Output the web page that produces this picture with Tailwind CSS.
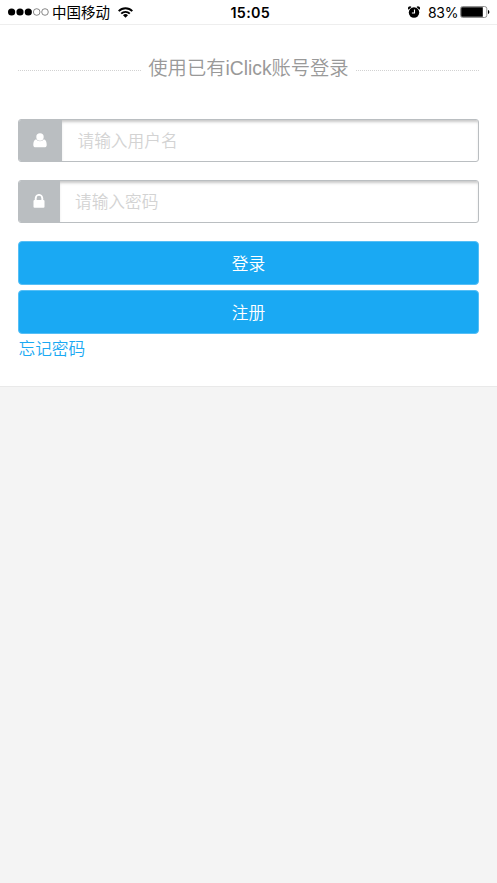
<!DOCTYPE html>
<html lang="zh-CN">
<head>
<meta charset="utf-8">
<meta name="viewport" content="width=device-width, initial-scale=1">
<title>iClick 登录</title>
<script src="https://cdn.jsdelivr.net/npm/@tailwindcss/browser@4"></script>
</head>
<body class="min-h-screen overflow-hidden bg-[#f4f4f4] font-['Inter','Noto_Sans_CJK_SC',sans-serif] font-[350]">
<header class="relative flex h-[25px] items-center justify-between border-b border-[#eeeeee] bg-white pl-2 pr-[7px] text-black">
  <div class="flex items-center">
    <svg class="h-[8px] w-[41px]" viewBox="0 0 41 8"><g fill="#000"><circle cx="3.6" cy="4" r="3.6"/><circle cx="12" cy="4" r="3.6"/><circle cx="20.3" cy="4" r="3.6"/></g><g fill="none" stroke="#555" stroke-width=".7"><circle cx="28.7" cy="4" r="3.3"/><circle cx="37" cy="4" r="3.3"/></g></svg>
    <span class="ml-[3px] pt-[2px] text-[14.5px] leading-[22px] font-normal">中国移动</span>
    <svg class="ml-[8px] h-[11px] w-[15px]" viewBox="0 0 15 11"><g fill="none" stroke="#000" stroke-width="1.9"><path d="M.7 4.1a9.6 9.6 0 0 1 13.6 0"/><path d="M3.2 6.6a6.1 6.1 0 0 1 8.6 0"/></g><path d="M5 8.3a3.6 3.6 0 0 1 5 0L7.5 10.8z"/></svg>
  </div>
  <time class="absolute left-[230.5px] top-0 text-[14.3px] leading-[26px] font-semibold tracking-[0.3px]">15:05</time>
  <div class="flex items-center">
    <svg class="h-[12px] w-[12px]" viewBox="0 0 12 12"><circle cx="6" cy="6.5" r="5.2"/><path d="M.6 3.7A2 2 0 0 1 3.5.9zM8.5.9a2 2 0 0 1 2.9 2.8z"/><path d="M6.5 3.5v3.5H3.9" fill="none" stroke="#fff" stroke-width="1.1"/></svg>
    <span class="ml-[8px] w-[32px] whitespace-nowrap pt-[2px] text-[14px] leading-[22px] font-normal tracking-[-0.3px]">83%</span>
    <svg class="h-[12px] w-[30px]" viewBox="0 0 30 12"><rect x=".5" y=".5" width="26.3" height="11" rx="2.2" fill="#fff" stroke="#777" stroke-width=".8"/><path d="M2.2 1.3H22.8V10.7H2.2a1 1 0 0 1-1-1V2.3a1 1 0 0 1 1-1z"/><path d="M28 4c1.8.3 1.8 3.7 0 4z"/></svg>
  </div>
</header>
<main class="h-[362px] border-b border-[#e9e9e9] bg-white px-[18px] pt-[28px]">
  <div class="flex h-[31px] items-center text-[#999999]">
    <div class="mt-[3px] flex-1 border-t border-dotted border-[#d2d2d2]"></div>
    <h1 class="w-[215px] whitespace-nowrap text-center text-[19.3px] leading-[30px] font-[350]">使用已有<span class="font-['Liberation_Sans']">iClick</span>账号登录</h1>
    <div class="mt-[3px] flex-1 border-t border-dotted border-[#d2d2d2]"></div>
  </div>
  <form class="mt-[35px]">
    <label class="flex h-[43px] overflow-hidden rounded-[3px] border border-[#babec1] bg-white">
      <span class="flex w-[43px] items-center justify-center bg-[#babec1]"><svg class="mr-px h-[15px] w-[14px]" viewBox="0 0 14 15" fill="#fff"><circle cx="7" cy="4" r="3.7"/><path d="M3.1 6.2C1 6.6.3 9 .3 12c0 1.5.9 2.3 2.3 2.3h8.8c1.4 0 2.3-.8 2.3-2.3 0-3-.7-5.4-2.8-5.8a4.6 4.6 0 0 1-7.8 0z"/></svg></span>
      <input type="text" placeholder="请输入用户名" class="min-w-0 flex-1 px-[15.5px] pt-[2px] text-[16.7px] font-[350] shadow-[inset_0_3px_3px_-1px_#c8c8c8] outline-none placeholder:text-[#d3d3d3]">
    </label>
    <label class="mt-[18px] flex h-[43px] overflow-hidden rounded-[3px] border border-[#babec1] bg-white">
      <span class="flex w-[41px] items-center justify-center bg-[#babec1]"><svg class="mr-px mb-px h-[14px] w-[12px]" viewBox="0 0 12 14"><path d="M2.7 7V4.2a3.3 3.3 0 0 1 6.6 0V7" fill="none" stroke="#fff" stroke-width="1.9"/><rect x=".5" y="6" width="11" height="7.8" rx="1" fill="#fff"/></svg></span>
      <input type="password" placeholder="请输入密码" class="min-w-0 flex-1 px-[15px] pt-[2px] text-[16.7px] font-[350] shadow-[inset_0_3px_3px_-1px_#c8c8c8] outline-none placeholder:text-[#d3d3d3]">
    </label>
    <button type="button" class="mt-[18px] block h-[44px] w-full rounded-[4px] border border-[#56bff6] bg-[#1aa9f3] pt-[3px] text-[16.7px] font-[350] text-white">登录</button>
    <button type="button" class="mt-[5px] block h-[44px] w-full rounded-[4px] border border-[#56bff6] bg-[#1aa9f3] pt-[3px] text-[16.7px] font-[350] text-white">注册</button>
    <a href="#" class="mt-[2px] ml-[0.5px] block text-[16.7px] leading-[27px] text-[#1aa9f3]">忘记密码</a>
  </form>
</main>
</body>
</html>
